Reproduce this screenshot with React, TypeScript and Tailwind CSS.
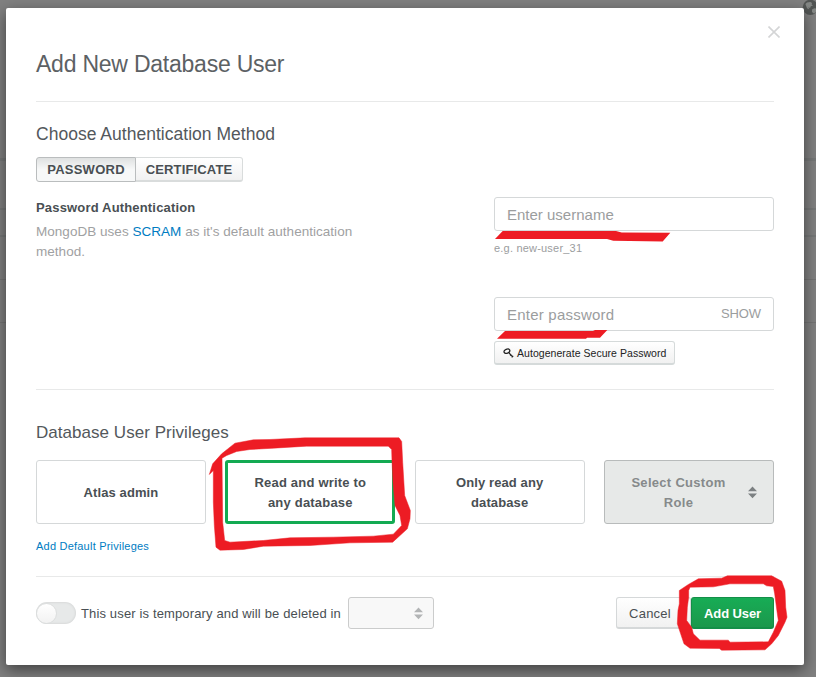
import React from "react";

function Sorter({ className }: { className: string }) {
  return (
    <svg width="9" height="13" viewBox="0 0 9 13" className={className} fill="currentColor">
      <path d="M4.5 0.5 9 5.3H0ZM0 7.5h9L4.5 12.3Z" />
    </svg>
  );
}

function KeyIcon() {
  return (
    <svg width="11" height="10" viewBox="0 0 11 10" fill="none" stroke="#222" className="shrink-0">
      <ellipse cx="3.9" cy="3.2" rx="3" ry="2" strokeWidth="1.3" transform="rotate(-22 3.9 3.2)" />
      <path d="M5.4 4.2 9.6 8.8M7.2 7.6l1.1-1.3M8.7 9.4l1.5-1.6" strokeWidth="1.2" />
    </svg>
  );
}

function Backdrop() {
  return (
    <div className="absolute inset-0 bg-[#808080]">
      <div className="absolute top-[158px] h-[3px] w-full bg-[#767878]" />
      <div className="absolute top-[208px] h-[2px] w-full bg-[#767878]" />
      <div className="absolute top-[235px] h-[2px] w-full bg-[#767878]" />
      <div className="absolute top-[279px] h-px w-full bg-[#747474]" />
      <div className="absolute top-[322px] h-px w-full bg-[#747474]" />
      <svg className="absolute left-[802px] top-0" width="14" height="16" viewBox="0 0 14 16">
        <circle cx="8.3" cy="7.3" r="7.6" fill="#525554" />
        <path d="M3.4 4 5 2.6 8.4 2l1.6 1-.4 1.6L11 5.4 8.8 6.2 8 8.3 6.6 7l.4 2.3L5 8.2ZM10 9.5l2.3-1.2 1.7.3v3.6l-2.3 1.2L10 12Z" fill="#858886" />
      </svg>
    </div>
  );
}

function Marks() {
  return (
    <svg className="pointer-events-none absolute inset-0" width="816" height="677" viewBox="0 0 816 677" fill="#ed1c24" fillRule="evenodd">
      <path d="M495 239 502.7 231H616L621.7 232.4 670.3 232.7 662.7 241.6 613.3 240.8 607 239Z" />
      <path d="M497 338.8 505 331H593L595 330H607.3L600 337.8H587L586 338.8Z" />
      <g transform="translate(200 425.5) scale(.33333)" stroke="#ed1c24" strokeWidth="1.5">
        <path d="M28 147 38 115 65 85 105 53 160 43 210 42 315 37H597L605 48 608 110 614 210 631 255 630 280 622 310 600 330 578 350 450 352 330 360 190 362 130 372 60 374 48 365 43 300 40 230V135ZM66 98 68 290 74 345 90 350 190 345 270 337 400 335 520 332 580 326 605 300 600 270 585 240 579 170 576 105 575 72 565 62H320L220 68 150 72 110 78 80 90Z" />
      </g>
      <g transform="translate(590 450.5) scale(.33333)" stroke="#ed1c24" strokeWidth="1.5">
        <path d="M268 420 295 402 325 385 395 383 412 376H545L575 392 585 420 587 470 591 500 585 515 565 555 545 580 525 598 395 599 388 594 300 593 282 580 272 550 262 520 264 480 268 460ZM296 420 300 410 370 409 420 400H520L530 406 550 408 554 430 562 490 565 510 550 545 535 574 420 575 415 569H330L310 550 305 530 290 510 292 470 296 440Z" />
      </g>
    </svg>
  );
}

export default function App() {
  return (
    <div className="relative h-[677px] w-[816px] overflow-hidden px-1.5 pt-2 font-['Liberation_Sans',Arial,sans-serif] text-[#494f53]">
      <Backdrop />
      <div className="relative flex h-[657px] w-[798px] flex-col rounded-[2px] bg-white px-[30px] shadow-[0_5px_15px_rgba(0,0,0,0.5)]">
        <header className="flex h-[94px] shrink-0 items-start justify-between border-b border-[#e8e9e9] pt-[41px]">
          <h1 className="text-[23px] leading-[30px] tracking-[-0.23px] text-[#5c6164]">Add New Database User</h1>
          <svg width="12" height="12" viewBox="0 0 12 12" className="-mt-[23px] mr-[-6px]" stroke="#d4d5d6" strokeWidth="1.6">
            <path d="M0.5 0.5 11.5 11.5M11.5 0.5 0.5 11.5" />
          </svg>
        </header>

        <section className="h-[288px] shrink-0 border-b border-[#e8e9e9] pt-5">
          <h2 className="text-[17.5px] leading-6 tracking-[0.02px] text-[#53585c]">Choose Authentication Method</h2>
          <div className="mt-[11px] flex h-[25px] w-[207px] text-[13px] font-bold">
            <button className="w-[100px] rounded-l-[3px] border border-[#babdbe] bg-linear-to-b from-[#dfe1e1] to-[#f7f8f8] to-50% tracking-[0.25px]">PASSWORD</button>
            <button className="flex-1 rounded-r-[3px] border border-b-2 border-l-0 border-[#d9dcdc] bg-linear-to-b from-white to-[#f1f1f1] pt-px tracking-[0.15px]">CERTIFICATE</button>
          </div>
          <div className="mt-[15px] flex justify-between">
            <div className="w-[330px]">
              <h3 className="text-[13px] font-bold leading-[22px] tracking-[0.17px]">Password Authentication</h3>
              <p className="mt-[3px] text-[13.5px] leading-5 tracking-[0.03px] text-[#9fa1a2]">
                MongoDB uses <a className="text-[#007cc2]">SCRAM</a> as it's default authentication
                <br />
                method.
              </p>
            </div>
            <div className="w-[280px]">
              <div className="flex h-[34px] items-center rounded-[3px] border border-[#d5d8d9] px-3 pt-[3px] text-[15px] text-[#9b9d9e]">
                <span>Enter username</span>
              </div>
              <p className="mt-[9px] text-[11px] leading-4 tracking-[0.2px] text-[#9b9d9e]">e.g. new-user_31</p>
              <div className="mt-[41px] flex h-[34px] items-center justify-between rounded-[3px] border border-[#d5d8d9] px-3 pt-[3px] text-[15px] text-[#9b9d9e]">
                <span className="tracking-[0.22px]">Enter password</span>
                <span className="pb-[3px] text-[13px] tracking-[-0.1px]">SHOW</span>
              </div>
              <button className="mt-2.5 flex h-6 w-[181px] items-center gap-[3px] rounded-[3px] border border-b-2 border-[#d5dada] bg-linear-to-b from-white to-[#f1f1f1] pl-2 text-[10.5px] text-[#222]">
                <KeyIcon />
                <span className="whitespace-nowrap pt-0.5 tracking-[0.04px]">Autogenerate Secure Password</span>
              </button>
            </div>
          </div>
        </section>

        <section className="h-[187px] shrink-0 border-b border-[#e8e9e9] pt-[31px]">
          <h2 className="text-[17px] leading-6 tracking-[0.04px] text-[#53585c]">Database User Privileges</h2>
          <div className="mt-[15px] flex h-16 justify-between text-center text-[13px] font-bold leading-5 tracking-[0.2px]">
            <div className="flex w-[170px] items-center justify-center rounded-[3px] border border-[#d5d8d9] pt-0.5 tracking-[0.1px]">Atlas admin</div>
            <div className="flex w-[170px] items-center justify-center rounded-[3px] border-3 border-[#13aa52] pt-0.5">
              <span>Read and write to<br />any database</span>
            </div>
            <div className="flex w-[170px] items-center justify-center rounded-[3px] border border-[#d5d8d9] pt-0.5 tracking-[0.1px]">
              <span>Only read any<br />database</span>
            </div>
            <div className="flex w-[170px] items-center rounded-[3px] border border-[#b8bbbb] bg-[#e7e9e8] pr-4 text-[#868a8b]">
              <span className="flex-1 pl-1 pt-0.5 tracking-[0.3px]">Select Custom<br />Role</span>
              <Sorter className="text-[#7c8082]" />
            </div>
          </div>
          <a className="mt-3.5 block text-[11px] leading-4 tracking-[0.22px] text-[#007cc2]">Add Default Privileges</a>
        </section>

        <footer className="flex items-center pt-5 text-[13px]">
          <div className="flex h-[22px] w-10 items-center rounded-full bg-[#e7e9e9] shadow-[inset_0_0_3px_rgba(0,0,0,0.12)]">
            <div className="size-[21px] rounded-full border border-[#dcdede] bg-linear-to-b from-white to-[#f2f2f2]" />
          </div>
          <span className="ml-[5px] w-[267px] whitespace-nowrap pt-0.5 tracking-[0.14px]">This user is temporary and will be deleted in</span>
          <div className="flex h-8 w-[86px] items-center justify-end rounded-[3px] border border-[#cbcccc] bg-[#f8f8f8] pr-2.5">
            <Sorter className="text-[#b2b4b5]" />
          </div>
          <button className="ml-auto h-8 w-[75px] rounded-[3px] border border-b-2 border-[#d5d8d9] bg-linear-to-b from-white to-[#f1f1f1] pr-[7px] pt-0.5 tracking-[0.25px]">Cancel</button>
          <button className="h-8 w-[83px] rounded-[3px] border border-b-2 border-[#148f48] bg-linear-to-b from-[#17ac55] to-[#1b984c] pt-0.5 font-bold tracking-[-0.1px] text-white">Add User</button>
        </footer>
      </div>
      <Marks />
    </div>
  );
}
